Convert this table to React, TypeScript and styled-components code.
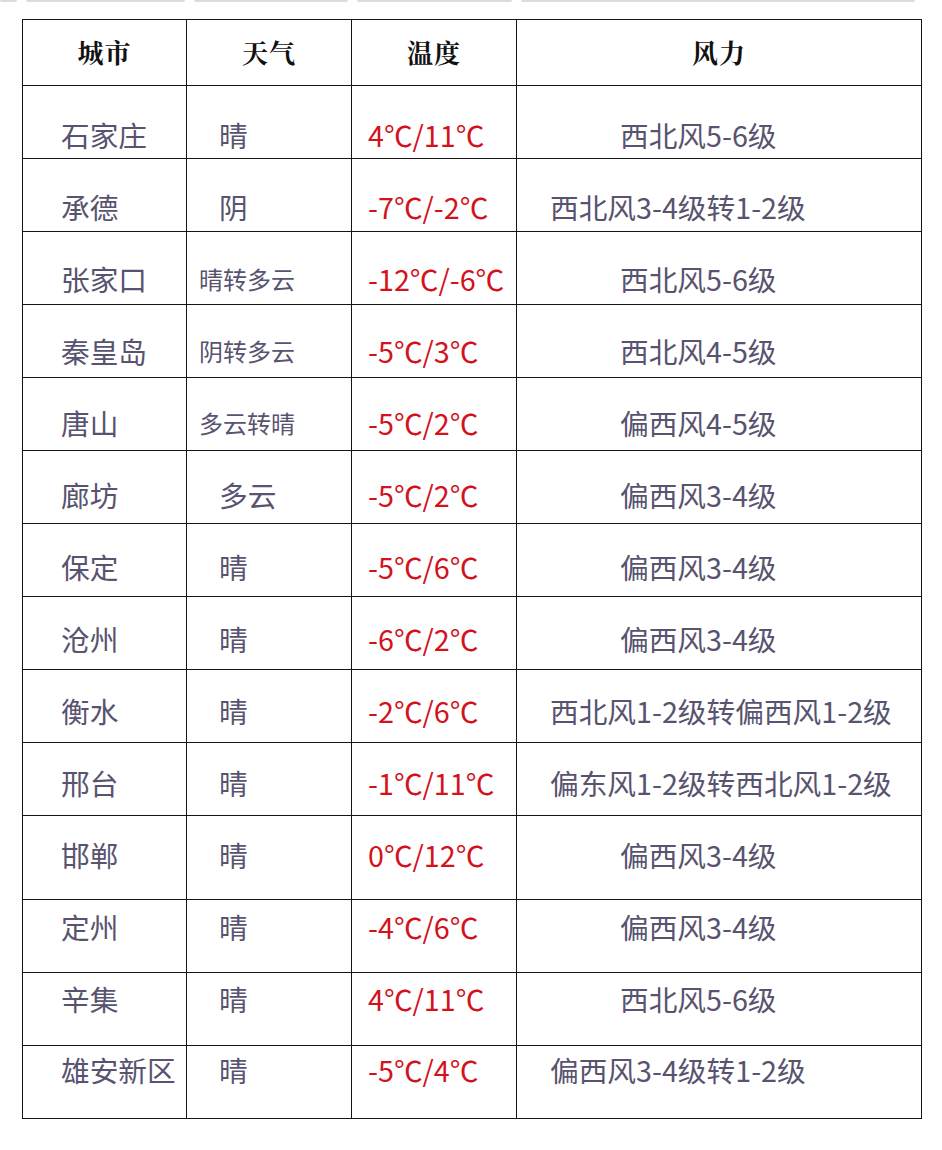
import React from 'react';
import styled, { createGlobalStyle } from 'styled-components';

interface Forecast {
  city: string;
  weather: string;
  temp: string;
  wind: string;
  longWind?: boolean;
}

const rows: Forecast[] = [
  { city: '石家庄', weather: '晴', temp: '4℃/11℃', wind: '西北风5-6级' },
  { city: '承德', weather: '阴', temp: '-7℃/-2℃', wind: '西北风3-4级转1-2级', longWind: true },
  { city: '张家口', weather: '晴转多云', temp: '-12℃/-6℃', wind: '西北风5-6级' },
  { city: '秦皇岛', weather: '阴转多云', temp: '-5℃/3℃', wind: '西北风4-5级' },
  { city: '唐山', weather: '多云转晴', temp: '-5℃/2℃', wind: '偏西风4-5级' },
  { city: '廊坊', weather: '多云', temp: '-5℃/2℃', wind: '偏西风3-4级' },
  { city: '保定', weather: '晴', temp: '-5℃/6℃', wind: '偏西风3-4级' },
  { city: '沧州', weather: '晴', temp: '-6℃/2℃', wind: '偏西风3-4级' },
  { city: '衡水', weather: '晴', temp: '-2℃/6℃', wind: '西北风1-2级转偏西风1-2级', longWind: true },
  { city: '邢台', weather: '晴', temp: '-1℃/11℃', wind: '偏东风1-2级转西北风1-2级', longWind: true },
  { city: '邯郸', weather: '晴', temp: '0℃/12℃', wind: '偏西风3-4级' },
  { city: '定州', weather: '晴', temp: '-4℃/6℃', wind: '偏西风3-4级' },
  { city: '辛集', weather: '晴', temp: '4℃/11℃', wind: '西北风5-6级' },
  { city: '雄安新区', weather: '晴', temp: '-5℃/4℃', wind: '偏西风3-4级转1-2级', longWind: true },
];

// row heights of the scanned table; the text sits on its own 72px rhythm
const rowHeight = (i: number) => (i === 10 ? 84 : 73);
const rowTop = (i: number) => 85 + 73 * i + (i > 10 ? 11 : 0);
const textPad = (i: number) => 136 + 72 * i - rowTop(i) - 20 - (i === 13 ? 1 : 0);

const stripSegments = [17, 159, 154, 155, 394];

const GlobalStyle = createGlobalStyle`
  html, body {
    margin: 0;
    padding: 0;
    background: #ffffff;
  }
  body {
    font-family: "Noto Sans CJK SC", "Noto Sans", sans-serif;
  }
`;

const Page = styled.div`
  width: 942px;
  height: 1150px;
  background: #fff;
  overflow: hidden;
`;

const Strip = styled.div`
  display: flex;
  gap: 9px;
  height: 3px;
  margin-bottom: 16px;
`;

const StripSegment = styled.div<{ $w: number }>`
  width: ${(p) => p.$w}px;
  height: 2px;
  background: #dcdcde;
  border-radius: 0 0 2px 2px;
`;

const Table = styled.div`
  margin-left: 22px;
  width: 900px;
  border-top: 1.5px solid #151515;
  border-left: 1.5px solid #151515;
  box-sizing: border-box;
`;

const Row = styled.div<{ $h: number }>`
  display: grid;
  grid-template-columns: 164px 165px 165px 405px;
  height: ${(p) => p.$h}px;
`;

const Cell = styled.div`
  border-right: 1.5px solid #151515;
  border-bottom: 1.5px solid #151515;
  box-sizing: border-box;
  overflow: hidden;
  white-space: nowrap;
`;

const HeadCell = styled(Cell)`
  display: flex;
  align-items: center;
  justify-content: center;
  padding-bottom: 2px;
  font-family: "Noto Serif CJK SC", "Noto Sans CJK SC", serif;
  font-weight: 700;
  font-size: 26px;
  color: #111;
  letter-spacing: 1px;
`;

const BodyCell = styled(Cell)<{ $pad: number; $left: number; $small?: boolean; $red?: boolean }>`
  padding-top: ${(p) => p.$pad + (p.$small ? 3 : 0)}px;
  padding-left: ${(p) => p.$left}px;
  font-size: ${(p) => (p.$small ? 24 : 28.7)}px;
  line-height: ${(p) => (p.$small ? 30 : 36)}px;
  color: ${(p) => (p.$red ? '#d3121c' : '#58536f')};
`;

const App: React.FC = () => {
  return (
    <Page>
      <GlobalStyle />
      <Strip>
        {stripSegments.map((w, i) => (
          <StripSegment key={i} $w={w} />
        ))}
      </Strip>
      <Table>
        <Row $h={66}>
          <HeadCell>城市</HeadCell>
          <HeadCell>天气</HeadCell>
          <HeadCell>温度</HeadCell>
          <HeadCell>风力</HeadCell>
        </Row>
        {rows.map((r, i) => {
          const small = r.weather.length > 2;
          return (
            <Row key={r.city} $h={rowHeight(i)}>
              <BodyCell $pad={textPad(i)} $left={38}>
                {r.city}
              </BodyCell>
              <BodyCell $pad={textPad(i)} $left={small ? 12 : 32} $small={small}>
                {r.weather}
              </BodyCell>
              <BodyCell $pad={textPad(i)} $left={16} $red>
                {r.temp}
              </BodyCell>
              <BodyCell $pad={textPad(i)} $left={r.longWind ? 33 : 103}>
                {r.wind}
              </BodyCell>
            </Row>
          );
        })}
      </Table>
    </Page>
  );
};

export default App;
